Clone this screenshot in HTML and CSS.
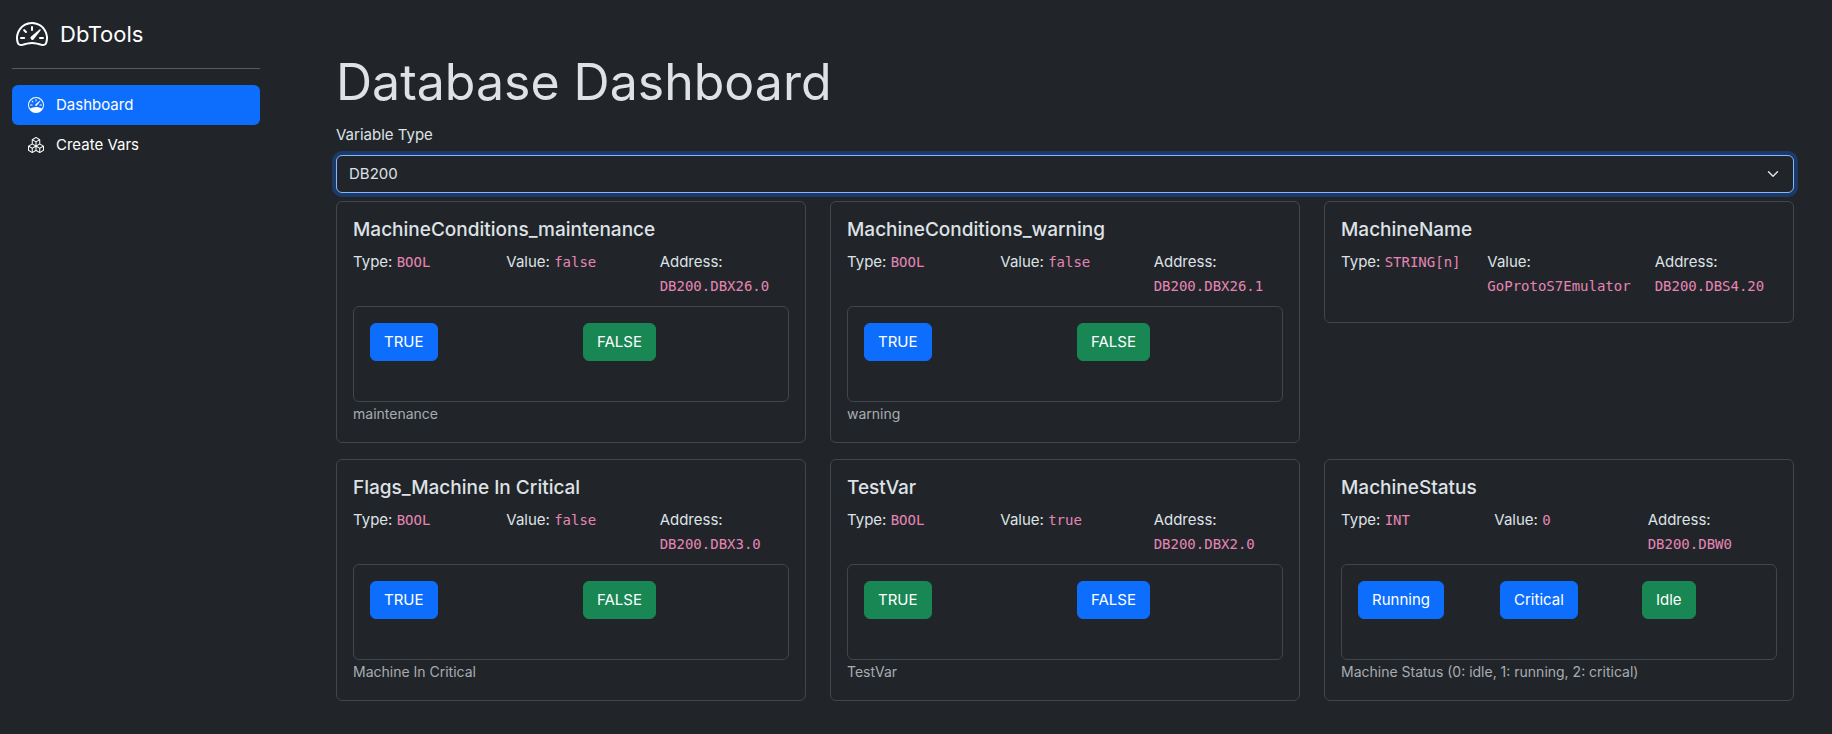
FILE: index.html
```html
<!DOCTYPE html>
<html lang="en">
<head>
<meta charset="utf-8">
<meta name="viewport" content="width=device-width, initial-scale=1">
<title>DbTools</title>
<link rel="stylesheet" href="styles.css">
</head>
<body>
<div class="layout">
  <nav class="sidebar">
    <a class="brand" href="#">
      <svg class="brand-icon" viewBox="0 0 16 16" aria-hidden="true"><path d="M8 4a.5.5 0 0 1 .5.5V6a.5.5 0 0 1-1 0V4.5A.5.5 0 0 1 8 4zM3.732 5.732a.5.5 0 0 1 .707 0l.915.914a.5.5 0 1 1-.708.708l-.914-.915a.5.5 0 0 1 0-.707zM2 10a.5.5 0 0 1 .5-.5h1.586a.5.5 0 0 1 0 1H2.5A.5.5 0 0 1 2 10zm9.5 0a.5.5 0 0 1 .5-.5h1.5a.5.5 0 0 1 0 1H12a.5.5 0 0 1-.5-.5zm.754-4.246a.389.389 0 0 0-.527-.02L7.547 9.31a.91.91 0 1 0 1.302 1.258l3.434-4.297a.389.389 0 0 0-.029-.518z"/><path fill-rule="evenodd" d="M0 10a8 8 0 1 1 15.547 2.661c-.442 1.253-1.845 1.602-2.932 1.25C11.309 13.488 9.475 13 8 13c-1.474 0-3.31.488-4.615.911-1.087.352-2.49.003-2.932-1.25A7.988 7.988 0 0 1 0 10zm8-7a7 7 0 0 0-6.603 9.329c.203.575.923.876 1.68.63C4.397 12.533 6.358 12 8 12s3.604.532 4.923.96c.757.245 1.477-.056 1.68-.631A7 7 0 0 0 8 3z"/></svg>
      <span>DbTools</span>
    </a>
    <hr class="divider">
    <ul class="nav">
      <li>
        <a class="nav-link active" href="#" aria-current="page">
          <svg class="nav-icon" viewBox="0 0 16 16" aria-hidden="true"><path d="M8 2a.5.5 0 0 1 .5.5V4a.5.5 0 0 1-1 0V2.5A.5.5 0 0 1 8 2zM3.732 3.732a.5.5 0 0 1 .707 0l.915.914a.5.5 0 1 1-.708.708l-.914-.915a.5.5 0 0 1 0-.707zM2 8a.5.5 0 0 1 .5-.5h1.586a.5.5 0 0 1 0 1H2.5A.5.5 0 0 1 2 8zm9.5 0a.5.5 0 0 1 .5-.5h1.5a.5.5 0 0 1 0 1H12a.5.5 0 0 1-.5-.5zm.754-4.246a.389.389 0 0 0-.527-.02L7.547 7.31A.91.91 0 1 0 8.85 8.569l3.434-4.297a.389.389 0 0 0-.029-.518z"/><path fill-rule="evenodd" d="M8 0a8 8 0 1 1 0 16A8 8 0 0 1 8 0zm-6.001 11.606A11.945 11.945 0 0 1 8 10c2.186 0 4.236.585 6.001 1.606a7 7 0 1 0-12.002 0z"/></svg>
          <span>Dashboard</span>
        </a>
      </li>
      <li>
        <a class="nav-link" href="#">
          <svg class="nav-icon" viewBox="0 0 16 16" aria-hidden="true"><path d="M7.752.066a.5.5 0 0 1 .496 0l3.75 2.143a.5.5 0 0 1 .252.434v3.995l3.498 2A.5.5 0 0 1 16 9.07v4.286a.5.5 0 0 1-.252.434l-3.75 2.143a.5.5 0 0 1-.496 0l-3.502-2-3.502 2.001a.5.5 0 0 1-.496 0l-3.75-2.143A.5.5 0 0 1 0 13.357V9.071a.5.5 0 0 1 .252-.434L3.75 6.638V2.643a.5.5 0 0 1 .252-.434L7.752.066ZM4.25 7.504 1.508 9.071l2.742 1.567 2.742-1.567L4.25 7.504ZM7.5 9.933l-2.75 1.571v3.134l2.75-1.571V9.933Zm1 3.134 2.75 1.571v-3.134L8.5 9.933v3.134Zm.508-3.996 2.742 1.567 2.742-1.567-2.742-1.567-2.742 1.567Zm2.242-2.433V3.504L8.5 5.076V8.21l2.75-1.572ZM7.5 8.21V5.076L4.75 3.504v3.134L7.5 8.21ZM5.258 2.643 8 4.21l2.742-1.567L8 1.076 5.258 2.643ZM15 9.933l-2.75 1.571v3.134L15 13.067V9.933ZM3.75 14.638v-3.134L1 9.933v3.134l2.75 1.571Z"/></svg>
          <span>Create Vars</span>
        </a>
      </li>
    </ul>
  </nav>

  <main class="content">
    <h1 class="page-title">Database Dashboard</h1>
    <label class="form-label" for="variable-type">Variable Type</label>
    <div class="select-wrap">
      <select class="select" id="variable-type"><option selected>DB200</option></select>
      <svg class="select-arrow" viewBox="0 0 16 16" aria-hidden="true"><path d="m2 5 6 6 6-6"/></svg>
    </div>

    <div class="cards">
      <section class="card">
        <h2 class="card-title">MachineConditions_maintenance</h2>
        <div class="row">
          <div class="col">Type: <code>BOOL</code></div>
          <div class="col">Value: <code>false</code></div>
          <div class="col">Address: <code>DB200.DBX26.0</code></div>
        </div>
        <div class="panel">
          <div class="row">
            <div class="col"><button class="btn" type="button">TRUE</button></div>
            <div class="col"><button class="btn current" type="button">FALSE</button></div>
          </div>
        </div>
        <p class="note">maintenance</p>
      </section>

      <section class="card">
        <h2 class="card-title">MachineConditions_warning</h2>
        <div class="row">
          <div class="col">Type: <code>BOOL</code></div>
          <div class="col">Value: <code>false</code></div>
          <div class="col">Address: <code>DB200.DBX26.1</code></div>
        </div>
        <div class="panel">
          <div class="row">
            <div class="col"><button class="btn" type="button">TRUE</button></div>
            <div class="col"><button class="btn current" type="button">FALSE</button></div>
          </div>
        </div>
        <p class="note">warning</p>
      </section>

      <section class="card">
        <h2 class="card-title">MachineName</h2>
        <div class="row">
          <div class="col">Type: <code>STRING[n]</code></div>
          <div class="col">Value: <code>GoProtoS7Emulator</code></div>
          <div class="col">Address: <code>DB200.DBS4.20</code></div>
        </div>
      </section>

      <section class="card">
        <h2 class="card-title">Flags_Machine In Critical</h2>
        <div class="row">
          <div class="col">Type: <code>BOOL</code></div>
          <div class="col">Value: <code>false</code></div>
          <div class="col">Address: <code>DB200.DBX3.0</code></div>
        </div>
        <div class="panel">
          <div class="row">
            <div class="col"><button class="btn" type="button">TRUE</button></div>
            <div class="col"><button class="btn current" type="button">FALSE</button></div>
          </div>
        </div>
        <p class="note">Machine In Critical</p>
      </section>

      <section class="card">
        <h2 class="card-title">TestVar</h2>
        <div class="row">
          <div class="col">Type: <code>BOOL</code></div>
          <div class="col">Value: <code>true</code></div>
          <div class="col">Address: <code>DB200.DBX2.0</code></div>
        </div>
        <div class="panel">
          <div class="row">
            <div class="col"><button class="btn current" type="button">TRUE</button></div>
            <div class="col"><button class="btn" type="button">FALSE</button></div>
          </div>
        </div>
        <p class="note">TestVar</p>
      </section>

      <section class="card">
        <h2 class="card-title">MachineStatus</h2>
        <div class="row">
          <div class="col">Type: <code>INT</code></div>
          <div class="col">Value: <code>0</code></div>
          <div class="col">Address: <code>DB200.DBW0</code></div>
        </div>
        <div class="panel">
          <div class="row">
            <div class="col"><button class="btn" type="button">Running</button></div>
            <div class="col"><button class="btn" type="button">Critical</button></div>
            <div class="col"><button class="btn current" type="button">Idle</button></div>
          </div>
        </div>
        <p class="note">Machine Status (0: idle, 1: running, 2: critical)</p>
      </section>
    </div>
  </main>
</div>
</body>
</html>
```

FILE: styles.css
```css
* {
  box-sizing: border-box;
}

body {
  margin: 0;
  background: #212529;
  color: #dee2e6;
  font: 400 15px/24px Inter, "Liberation Sans", sans-serif;
}

.layout {
  display: flex;
  min-height: 100vh;
}

.sidebar {
  flex: 0 0 272px;
  padding: 16px 12px;
  color: #fff;
}

.brand {
  display: flex;
  align-items: center;
  gap: 12px;
  padding-left: 4px;
  color: #fff;
  font-size: 22px;
  line-height: 36px;
  text-decoration: none;
}

.brand-icon {
  width: 32px;
  height: 32px;
  fill: currentColor;
}

.divider {
  height: 1px;
  margin: 16px 0;
  border: 0;
  background: rgba(255, 255, 255, 0.25);
}

.nav {
  margin: 0;
  padding: 0;
  list-style: none;
}

.nav-link {
  display: flex;
  align-items: center;
  gap: 12px;
  padding: 8px 16px;
  border-radius: 6px;
  color: #fff;
  text-decoration: none;
}

.nav-link.active {
  background: #0d6efd;
}

.nav-icon {
  width: 16px;
  height: 16px;
  fill: currentColor;
}

.content {
  flex: 1;
  min-width: 0;
  padding: 50px 38px 32px 64px;
}

.page-title {
  margin: 0 0 8px;
  font-size: 50px;
  font-weight: 400;
  line-height: 65px;
}

.form-label {
  display: block;
  margin-bottom: 8px;
}

.select-wrap {
  position: relative;
  margin-bottom: 8px;
}

.select {
  display: block;
  width: 100%;
  height: 38px;
  padding: 6px 36px 6px 12px;
  appearance: none;
  border: 1px solid #86b7fe;
  border-radius: 6px;
  outline: 0;
  background: #212529;
  box-shadow: 0 0 0 4px rgba(13, 110, 253, 0.3);
  color: #dee2e6;
  font: inherit;
}

.select-arrow {
  position: absolute;
  top: 13px;
  right: 13px;
  width: 16px;
  height: 12px;
  fill: none;
  stroke: #dee2e6;
  stroke-width: 2;
  stroke-linecap: round;
  stroke-linejoin: round;
  pointer-events: none;
}

.cards {
  display: grid;
  grid-template-columns: repeat(3, minmax(0, 1fr));
  align-items: start;
  gap: 16px 24px;
}

.card {
  padding: 16px;
  border: 1px solid #42464a;
  border-radius: 6px;
}

.card-title {
  margin: 0 0 8px;
  font-size: 19px;
  font-weight: 500;
  line-height: 24px;
}

.row {
  display: flex;
  margin: 0 -12px 8px;
}

.col {
  flex: 1 0 0%;
  padding: 0 12px;
}

code {
  color: #e685b5;
  font-family: "DejaVu Sans Mono", monospace;
  font-size: 14px;
  line-height: 16px;
}

.panel {
  padding: 16px 16px 32px;
  border: 1px solid #42464a;
  border-radius: 6px;
}

.panel .row {
  margin-bottom: 0;
}

.panel .col {
  display: flex;
  padding-bottom: 8px;
}

.btn {
  padding: 6px 13px;
  border: 1px solid #0d6efd;
  border-radius: 6px;
  background: #0d6efd;
  color: #fff;
  font: inherit;
}

.btn.current {
  border-color: #198754;
  background: #198754;
}

.note {
  margin: 0;
  color: #a7acb1;
  font-size: 14px;
}
```
